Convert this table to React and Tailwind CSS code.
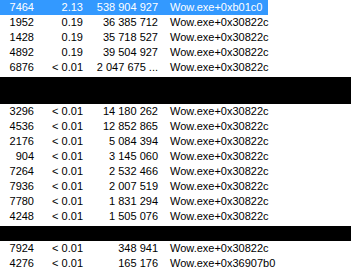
import React from 'react';

const top = [
  ['7464', '2.13', '538 904 927', 'Wow.exe+0xb01c0', true],
  ['1952', '0.19', '36 385 712', 'Wow.exe+0x30822c'],
  ['1428', '0.19', '35 718 527', 'Wow.exe+0x30822c'],
  ['4892', '0.19', '39 504 927', 'Wow.exe+0x30822c'],
  ['6876', '< 0.01', '2 047 675 ...', 'Wow.exe+0x30822c'],
];

const middle = [
  ['3296', '< 0.01', '14 180 262', 'Wow.exe+0x30822c'],
  ['4536', '< 0.01', '12 852 865', 'Wow.exe+0x30822c'],
  ['2176', '< 0.01', '5 084 394', 'Wow.exe+0x30822c'],
  ['904', '< 0.01', '3 145 060', 'Wow.exe+0x30822c'],
  ['7264', '< 0.01', '2 532 466', 'Wow.exe+0x30822c'],
  ['7936', '< 0.01', '2 007 519', 'Wow.exe+0x30822c'],
  ['7780', '< 0.01', '1 831 294', 'Wow.exe+0x30822c'],
  ['4248', '< 0.01', '1 505 076', 'Wow.exe+0x30822c'],
];

const bottom = [
  ['7924', '< 0.01', '348 941', 'Wow.exe+0x30822c'],
  ['4276', '< 0.01', '165 176', 'Wow.exe+0x36907b0'],
];

function Row({ row }) {
  const [tid, cpu, cycles, start, selected] = row;
  return (
    <div
      className={`flex h-[15px] leading-[15px] whitespace-nowrap ${
        selected ? 'w-[268px] bg-[#3399ff] text-white' : 'text-black'
      }`}
    >
      <div className="w-[34px] text-right">{tid}</div>
      <div className="w-[49px] text-right">{cpu}</div>
      <div className="w-[75px] text-right">{cycles}</div>
      <div className="pl-[12px]">{start}</div>
    </div>
  );
}

export default function App() {
  return (
    <div className="w-[351px] h-[270px] overflow-hidden bg-white text-[11px] font-['Liberation_Sans',Arial,sans-serif]">
      {top.map((r, i) => <Row key={i} row={r} />)}
      <div className="mt-[2px] h-[27px] bg-black" />
      {middle.map((r, i) => <Row key={i} row={r} />)}
      <div className="mt-[2px] h-[15px] bg-black" />
      {bottom.map((r, i) => <Row key={i} row={r} />)}
    </div>
  );
}
